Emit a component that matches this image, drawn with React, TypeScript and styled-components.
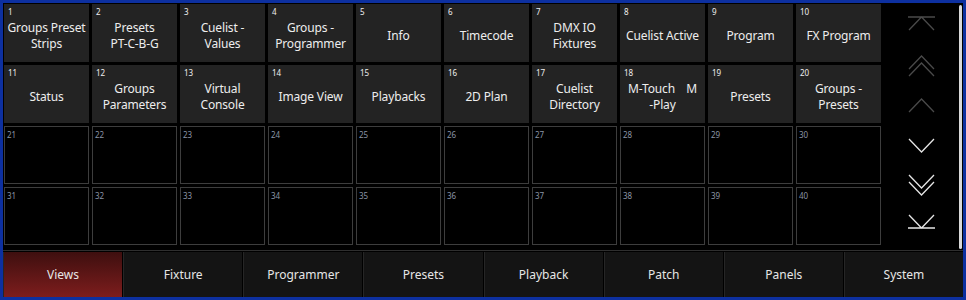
import styled, { createGlobalStyle } from 'styled-components'

const GlobalStyle = createGlobalStyle`
  html, body {
    margin: 0;
    padding: 0;
    background: #000;
  }
  body {
    font-family: "Noto Sans", "Open Sans", sans-serif;
  }
`

interface ViewTile {
  num: number
  label?: string
}

const tiles: ViewTile[] = [
  { num: 1, label: 'Groups Preset\nStrips' },
  { num: 2, label: 'Presets\nPT-C-B-G' },
  { num: 3, label: 'Cuelist -\nValues' },
  { num: 4, label: 'Groups -\nProgrammer' },
  { num: 5, label: 'Info' },
  { num: 6, label: 'Timecode' },
  { num: 7, label: 'DMX IO\nFixtures' },
  { num: 8, label: 'Cuelist Active' },
  { num: 9, label: 'Program' },
  { num: 10, label: 'FX Program' },
  { num: 11, label: 'Status' },
  { num: 12, label: 'Groups\nParameters' },
  { num: 13, label: 'Virtual\nConsole' },
  { num: 14, label: 'Image View' },
  { num: 15, label: 'Playbacks' },
  { num: 16, label: '2D Plan' },
  { num: 17, label: 'Cuelist\nDirectory' },
  { num: 18, label: 'M-Touch M\n-Play' },
  { num: 19, label: 'Presets' },
  { num: 20, label: 'Groups -\nPresets' },
]

for (let i = 21; i <= 40; i++) tiles.push({ num: i })

const tabs = ['Views', 'Fixture', 'Programmer', 'Presets', 'Playback', 'Patch', 'Panels', 'System']

type ArrowKind = 'top' | 'pageUp' | 'up' | 'down' | 'pageDown' | 'bottom'

function Arrow({ kind }: { kind: ArrowKind }) {
  const up = kind === 'top' || kind === 'pageUp' || kind === 'up'
  const stroke = up ? '#4a4a4a' : '#e6e6e6'
  const chevUp = (y: number) => `M1 ${y + 13} L13.5 ${y} L26 ${y + 13}`
  const chevDown = (y: number) => `M1 ${y} L13.5 ${y + 13} L26 ${y}`
  let d = ''
  if (kind === 'top') d = `M0 1 H27 ${chevUp(1)}`
  if (kind === 'pageUp') d = `${chevUp(1)} ${chevUp(8)}`
  if (kind === 'up') d = chevUp(4)
  if (kind === 'down') d = chevDown(4)
  if (kind === 'pageDown') d = `${chevDown(1)} ${chevDown(8)}`
  if (kind === 'bottom') d = `${chevDown(1)} M0 14 H27`
  return (
    <svg width="27" height="22" viewBox="0 0 27 22">
      <path d={d} fill="none" stroke={stroke} strokeWidth="1.3" />
    </svg>
  )
}

export default function App() {
  return (
    <>
      <GlobalStyle />
      <Frame>
        <Main>
          <Grid>
            {tiles.map(t =>
              t.label ? (
                <Tile key={t.num}>
                  <TileNum>{t.num}</TileNum>
                  {t.num === 18 ? (
                    <TileLabel>
                      <SpreadLine>
                        <span>M-Touch</span>
                        <span>M</span>
                      </SpreadLine>
                      -Play
                    </TileLabel>
                  ) : (
                    <TileLabel>{t.label}</TileLabel>
                  )}
                </Tile>
              ) : (
                <EmptyTile key={t.num}>
                  <EmptyNum>{t.num}</EmptyNum>
                </EmptyTile>
              )
            )}
          </Grid>
          <ScrollPanel>
            <ArrowColumn>
              {(['top', 'pageUp', 'up', 'down', 'pageDown', 'bottom'] as ArrowKind[]).map(k => (
                <ArrowButton key={k}>
                  <Arrow kind={k} />
                </ArrowButton>
              ))}
            </ArrowColumn>
            <ScrollThumb />
          </ScrollPanel>
        </Main>
        <TabBar>
          {tabs.map((t, i) => (
            <Tab key={t} $active={i === 0}>
              {t}
            </Tab>
          ))}
        </TabBar>
      </Frame>
    </>
  )
}

// Styled Components
const Frame = styled.div`
  width: 966px;
  height: 300px;
  box-sizing: border-box;
  border: 3px solid #0d30a0;
  background: #000;
  display: flex;
  flex-direction: column;
`

const Main = styled.div`
  height: 246px;
  display: flex;
`

const Grid = styled.div`
  display: grid;
  grid-template-columns: repeat(10, 85px);
  grid-template-rows: repeat(4, 58px);
  gap: 3px;
  padding: 1px 0 0 1px;
`

const Tile = styled.div`
  position: relative;
  background: #232323;
  display: flex;
  align-items: center;
  justify-content: center;
  padding: 6px 3px 0;
  box-sizing: border-box;
`

const TileNum = styled.div`
  position: absolute;
  top: 3px;
  left: 4px;
  font-size: 8px;
  line-height: 10px;
  color: #f0f0f0;
`

const TileLabel = styled.div`
  width: 100%;
  white-space: pre-line;
  text-align: center;
  font-size: 12px;
  letter-spacing: -0.15px;
  line-height: 16px;
  color: #ededed;
`

const SpreadLine = styled.div`
  display: flex;
  justify-content: space-between;
  padding: 0 5px;
`

const EmptyTile = styled.div`
  position: relative;
  background: #000;
  border: 1px solid #3d3d3d;
  box-sizing: border-box;
`

const EmptyNum = styled.div`
  position: absolute;
  top: 3px;
  left: 2px;
  font-size: 8px;
  line-height: 10px;
  color: #8a94a6;
`

const ScrollPanel = styled.div`
  position: relative;
  flex: 1;
  margin-left: 3px;
`

const ArrowColumn = styled.div`
  width: 74px;
  height: 100%;
  display: flex;
  flex-direction: column;
  justify-content: space-around;
  align-items: center;
  padding: 4px 0;
  box-sizing: border-box;
`

const ArrowButton = styled.div`
  height: 22px;
  display: flex;
  align-items: center;
`

const ScrollThumb = styled.div`
  position: absolute;
  right: 1px;
  top: 2px;
  bottom: 0;
  width: 3px;
  border-radius: 2px;
  background: #d8d8d8;
`

const TabBar = styled.div`
  flex: 1;
  display: flex;
  gap: 1px;
  border-top: 1px solid #2f2f2f;
  margin-top: 1px;
  padding-top: 1px;
  background: #000;
`

const Tab = styled.div<{ $active: boolean }>`
  flex: 1;
  display: flex;
  align-items: center;
  justify-content: center;
  font-size: 12px;
  color: #e6e6e6;
  border-left: 1px solid #262626;
  background: ${p => (p.$active ? 'linear-gradient(180deg, #3e0f0f 0%, #7d1d1d 100%)' : '#141414')};
`
